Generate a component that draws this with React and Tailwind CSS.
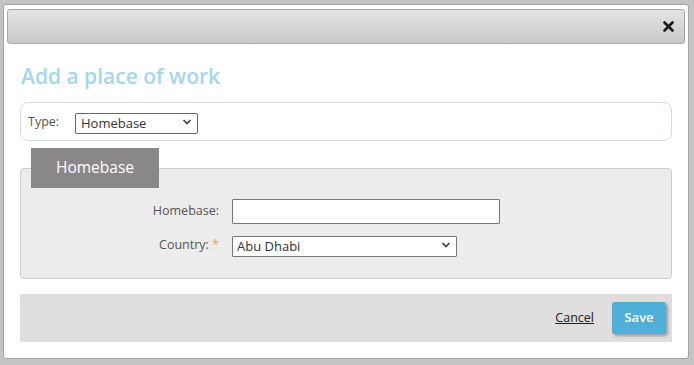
import { useState } from "react";

// chevron used by the two selects
function Chevron() {
  return (
    <svg width="10" height="7" viewBox="0 0 10 7" className="pointer-events-none absolute right-[6px] top-1/2 -translate-y-1/2">
      <path d="M1.5 1.5 L5 5 L8.5 1.5" fill="none" stroke="#444" strokeWidth="1.7" />
    </svg>
  );
}

export default function App() {
  const [type, setType] = useState("Homebase");
  const [country, setCountry] = useState("Abu Dhabi");

  return (
    <div className="w-[694px] h-[365px] bg-[#c3c3c3] pt-[4px] pl-[3px] overflow-hidden" style={{ fontFamily: '"Open Sans", "Noto Sans", sans-serif' }}>
      <div className="w-[686px] h-[355px] bg-white border border-[#a3a3a3] rounded-[3px] p-[3px] pt-[4px]">
        {/* title bar */}
        <div className="h-[35px] rounded-[3px] border border-[#a9a9a9] bg-gradient-to-b from-[#e4e4e4] to-[#c9c9c9] flex items-center justify-end pr-[10px]">
          <svg width="11" height="11" viewBox="0 0 11 11">
            <path d="M1.5 1.5 L9.5 9.5 M9.5 1.5 L1.5 9.5" stroke="#1a1a1a" strokeWidth="2.6" strokeLinecap="round" />
          </svg>
        </div>

        <div className="px-[13px]">
          <div className="mt-[18px] h-[29px] leading-[29px] text-[21px] font-semibold text-[#a5d6ec] pl-[1px]">Add a place of work</div>

          <div className="mt-[11px] h-[39px] border border-[#cfe1e1] rounded-[8px] flex items-center pl-[7px]">
            <span className="text-[12.5px] text-[#555] w-[47px] pt-[2px]">Type:</span>
            <div className="relative">
              <select
                value={type}
                onChange={(e) => setType(e.target.value)}
                className="appearance-none w-[123px] h-[21px] border border-[#666] rounded-[2px] bg-white text-[13px] text-[#333] pl-[5px] leading-[19px] outline-none"
              >
                <option>Homebase</option>
                <option>Office</option>
              </select>
              <Chevron />
            </div>
          </div>

          <div className="mt-[7px] relative z-10 ml-[11px] w-[128px] h-[40px] bg-[#8a8788] text-white text-[15.5px] flex items-center justify-center">Homebase</div>
          <div className="-mt-[20px] h-[111px] bg-[#ececec] border border-[#cccccc] rounded-[4px] pt-[30px]">
            <div className="flex items-center">
              <label className="w-[198px] text-right text-[12.5px] text-[#555]">Homebase:</label>
              <input className="ml-[13px] w-[268px] h-[25px] border border-[#777] rounded-[1px] bg-white outline-none px-1 text-[13px]" />
            </div>
            <div className="flex items-center mt-[9px]">
              <label className="w-[198px] text-right text-[12.5px] text-[#555]">
                Country: <span className="text-[#f0a534]">*</span>
              </label>
              <div className="relative ml-[13px]">
                <select
                  value={country}
                  onChange={(e) => setCountry(e.target.value)}
                  className="appearance-none w-[225px] h-[21px] border border-[#777] rounded-[1px] bg-white text-[13px] text-[#333] pl-[4px] leading-[19px] outline-none"
                >
                  <option>Abu Dhabi</option>
                  <option>Dubai</option>
                </select>
                <Chevron />
              </div>
            </div>
          </div>

          <div className="mt-[15px] h-[48px] bg-[#dfdddd] flex items-center justify-end pr-[6px]">
            <a href="#" className="text-[12.5px] text-[#222] underline mr-[18px]">Cancel</a>
            <button className="w-[54px] h-[32px] rounded-[3px] bg-[#4fafd6] text-white text-[13px] font-semibold shadow-[2px_2px_3px_rgba(0,0,0,0.3)]">Save</button>
          </div>
        </div>
      </div>
    </div>
  );
}
